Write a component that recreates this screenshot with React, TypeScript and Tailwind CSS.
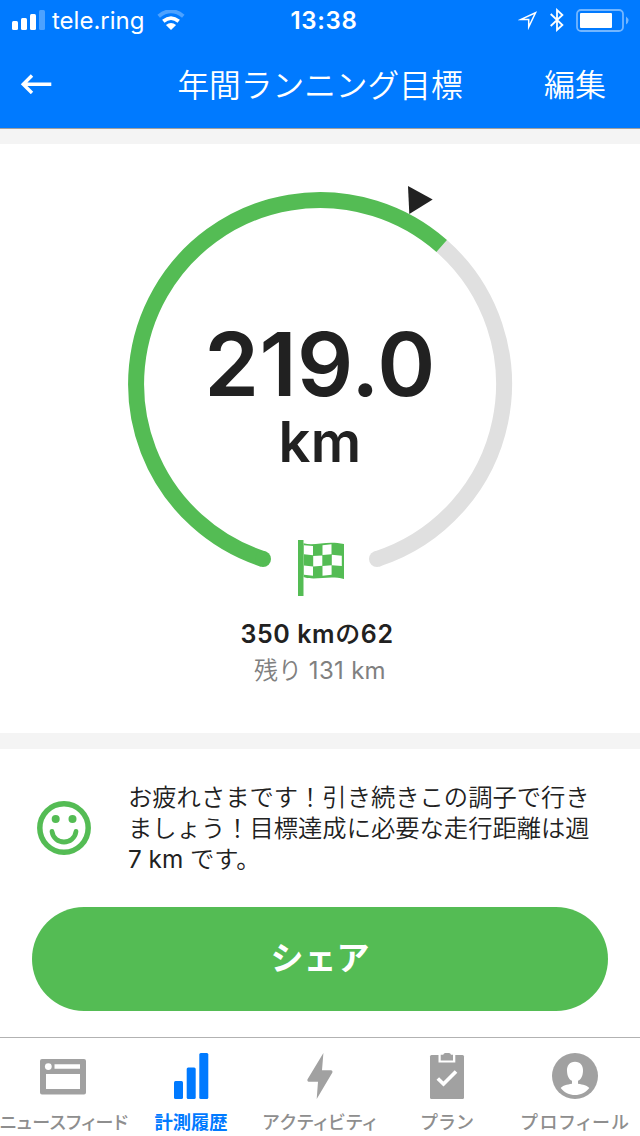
import React from 'react';

type TabProps = {
    label: string;
    active?: boolean;
    textClass?: string;
    children: React.ReactNode;
};

const StatusBar: React.FC = () => (
    <div className="h-10 grid grid-cols-3 items-center">
        <div className="flex items-center pl-3">
            <svg width="34" height="20" viewBox="0 0 34 20" fill="#fff">
                <rect x="0" y="11" width="6" height="9" rx="1.5" />
                <rect x="9" y="8" width="6" height="12" rx="1.5" />
                <rect x="18" y="4" width="6" height="16" rx="1.5" />
                <rect x="27" y="0" width="6" height="20" rx="1.5" opacity="0.3" />
            </svg>
            <span className="ml-1.5 pt-0.5 text-[24px] leading-[38px]">tele.ring</span>
            <svg className="ml-[13px] shrink-0" width="28" height="20" viewBox="0 0 28 20" fill="none" stroke="#fff">
                <path d="M1.7 6.2 Q14 -3.7 26.3 6.2" strokeWidth="4" opacity="0.3" />
                <path d="M6.3 11.3 Q14 5 21.7 11.3" strokeWidth="3.7" />
                <path d="M8.9 15 Q14 10.8 19.1 15 L14 20Z" fill="#fff" stroke="none" />
            </svg>
        </div>
        <div className="pl-2 pt-0.5 text-center text-[24px] font-semibold leading-[38px] tracking-[0.7px]">13:38</div>
        <div className="flex items-center justify-end pr-[11px]">
            <svg width="20" height="20" viewBox="0 0 20 20" fill="none" stroke="#fff" strokeWidth="1.5">
                <path d="M17.5 2.8 L3 9.4 H10.7 V17Z" strokeMiterlimit="10" />
            </svg>
            <svg className="ml-3" width="14" height="24" viewBox="0 0 14 24" fill="none" stroke="#fff" strokeWidth="1.8">
                <path d="M.7 6 L12.4 17 L7 22 V2 L12.4 7 L.7 18" />
            </svg>
            <svg className="ml-3" width="53" height="24" viewBox="0 0 53 24">
                <rect x="1" y="2" width="46" height="21" rx="4" fill="none" stroke="#fff" strokeWidth="1.8" opacity="0.45" />
                <rect x="4" y="5" width="32" height="15" rx="1" fill="#fff" />
                <path d="M50 8.5 Q55 12.5 50 16.5Z" fill="#fff" opacity="0.45" />
            </svg>
        </div>
    </div>
);

const NavBar: React.FC = () => (
    <div className="h-[88px] grid grid-cols-[120px_1fr_120px] items-center text-[31.7px] font-[350]">
        <button className="pl-5" aria-label="back">
            <svg width="32" height="20" viewBox="0 0 32 20" fill="none" stroke="#fff" strokeWidth="3.4">
                <path d="M31.3 10.3 H3 M12 1.5 L3.2 10.3 L12 19" />
            </svg>
        </button>
        <h1 className="pt-[3px] text-center whitespace-nowrap">年間ランニング目標</h1>
        <button className="pt-[3px] pr-[34px] text-right whitespace-nowrap text-[31px]">編集</button>
    </div>
);

const FinishFlag: React.FC = () => (
    <svg width="48" height="58" viewBox="0 0 48 58">
        <path d="M0 1 H5.5 V57 H0Z" fill="#54bc54" />
        <path d="M5.5 4.2 C17 7.5 28 1 46 5 V40 C31 36 17 42 5.5 38Z" fill="#54bc54" />
        <g fill="#fff">
            <path d="M6 6.2 L15 7 V16.2 L6 15.2Z" />
            <path d="M24.5 6.3 L33.5 5.3 V15.3 L24.5 16Z" />
            <path d="M15.2 17 L24.3 16.5 V26.8 L15.2 27.4Z" />
            <path d="M33.8 15.7 L43.8 16.7 V27 L33.8 26.2Z" />
            <path d="M6 26.5 L15 27.5 V36.8 L6 35.8Z" />
            <path d="M24.5 27 L33.6 26.3 V35.8 L24.5 36.8Z" />
        </g>
    </svg>
);

const GoalRing: React.FC = () => (
    <div className="grid place-items-center w-[400px] h-[416px]">
        <svg className="col-start-1 row-start-1" width="400" height="416" viewBox="120 184 400 416" fill="none" strokeWidth="16">
            <path d="M441.7 246 A184 184 0 0 1 377 559" stroke="#e0e0e0" />
            <circle cx="377" cy="559" r="8" fill="#e0e0e0" stroke="none" />
            <path d="M263 559 A184 184 0 1 1 441.7 246" stroke="#54bc54" />
            <circle cx="263" cy="559" r="8" fill="#54bc54" stroke="none" />
            <path d="M408 186 L432.7 199.5 L409.3 214Z" fill="#212121" stroke="none" />
        </svg>
        <div className="col-start-1 row-start-1 self-stretch flex flex-col items-center pt-[136px] text-[#212121] font-semibold">
            <span className="text-[88px] leading-[88px] tracking-[0.4px]">219.0</span>
            <span className="mt-px text-[56px] leading-[67px] tracking-[0.4px]">km</span>
            <div className="mt-[63px] ml-[5px]">
                <FinishFlag />
            </div>
        </div>
    </div>
);

const Smiley: React.FC = () => (
    <svg width="54" height="54" viewBox="0 0 54 54" fill="none" stroke="#54bc54" strokeLinecap="round">
        <circle cx="27" cy="27" r="24.2" strokeWidth="5.5" />
        <circle cx="18.7" cy="18" r="4" fill="#54bc54" stroke="none" />
        <circle cx="35.5" cy="18" r="4" fill="#54bc54" stroke="none" />
        <path d="M15 30.5 C17 44.5 37 44.5 39 30.5" strokeWidth="4.8" />
    </svg>
);

const Tab: React.FC<TabProps> = ({ label, active, textClass, children }) => (
    <button className={`w-32 flex flex-col items-center pt-[14px] pr-0.5 ${active ? 'text-[#007aff]' : 'text-[#a1a1a1]'}`}>
        <svg width="48" height="48" viewBox="0 0 48 48" fill="currentColor">{children}</svg>
        <span className={`leading-6 whitespace-nowrap ${textClass ?? ''} ${active ? 'mt-2.5 font-bold' : 'mt-[11px] font-medium text-[#8e8e8e]'}`}>
            {label}
        </span>
    </button>
);

const TabBar: React.FC = () => (
    <nav className="h-[99px] flex border-t border-[#b2b2b2] overflow-hidden">
        <Tab label="ニュースフィード" textClass="text-[18px] pl-0.5 tracking-[0.4px] [font-feature-settings:'palt']">
            <path fillRule="evenodd" d="M3 7 H45 Q47 7 47 9 V40.5 Q47 42.5 45 42.5 H3 Q1 42.5 1 40.5 V9 Q1 7 3 7Z M15.5 12.3 V16.7 H41 V12.3Z M7 22 V37 H41 V22Z" />
            <circle cx="9.3" cy="14.6" r="3.4" fill="#fff" />
        </Tab>
        <Tab label="計測履歴" active textClass="text-[18.3px]">
            <rect x="7" y="29" width="9" height="18" rx="1.5" />
            <rect x="19.7" y="15.5" width="9" height="31.5" rx="1.5" />
            <rect x="32.3" y="1" width="9" height="46" rx="1.5" />
        </Tab>
        <Tab label="アクティビティ" textClass="text-[18px] pl-0.5 tracking-[1.1px] [font-feature-settings:'palt']">
            <path d="M28.4 1 L12.4 27.5 Q12 29.5 13.5 29.8 H23 L21.7 47 L37.4 20.5 Q38 18.5 36.2 18.3 H27Z" />
        </Tab>
        <Tab label="プラン" textClass="text-[18px]">
            <rect x="7" y="3" width="34" height="44" rx="1.5" />
            <path d="M15.5 3 V10.5 H32.3 V3Z" fill="#fff" />
            <path d="M17.7 8.5 V2.8 H20.2 Q20.8 1 22.2 1 H26 Q27.5 1 28 2.8 H30 V8.5Z" />
            <path d="M14.8 26.5 L20.5 32 L33 19.5" fill="none" stroke="#fff" strokeWidth="3.7" />
        </Tab>
        <Tab label="プロフィール" textClass="text-[18px] pl-0.5 tracking-[2.1px] [font-feature-settings:'palt']">
            <circle cx="24" cy="24" r="23" />
            <path fill="#fff" d="M24 9.8 C29.5 9.8 32.3 14 32 19 C31.8 24 30 27.7 27 28.8 V31.8 C32 32.7 36.5 33.7 38.3 36 C35 40.4 29.5 43 24 43 C18.5 43 13 40.4 9.7 36 C11.5 33.7 16 32.7 21 31.8 V28.8 C18 27.7 16.2 24 16 19 C15.7 14 18.5 9.8 24 9.8Z" />
        </Tab>
    </nav>
);

export default function App() {
    return (
        <div className="w-[640px] h-[1136px] flex flex-col overflow-hidden bg-white text-[#212121] font-['Inter','Noto_Sans_CJK_JP',sans-serif]">
            <header className="bg-[#007aff] text-white">
                <StatusBar />
                <NavBar />
            </header>
            <div className="h-4 bg-[#f4f4f4] border-t border-[#a0a0a0]" />

            <section className="h-[589px] flex flex-col items-center pt-10">
                <GoalRing />
                <p className="mt-[18px] mr-1.5 text-[25px] leading-8 font-semibold tracking-[0.6px]">
                    350 km<span className="font-medium">の</span>62
                </p>
                <p className="mt-[5px] text-[24px] leading-8 font-[350] text-[#808080]">
                    残り <span className="font-normal tracking-[0.3px]">131 km</span>
                </p>
            </section>
            <div className="h-4 bg-[#f4f4f4]" />

            <section className="h-72 px-8">
                <div className="flex pt-[33px] pl-[5px]">
                    <div className="mt-[19px] w-[91px] shrink-0">
                        <Smiley />
                    </div>
                    <p className="text-[24.3px] leading-[31px] whitespace-nowrap font-[350]">
                        お疲れさまです！引き続きこの調子で行き<br />
                        ましょう！目標達成に必要な走行距離は週<br />
                        <span className="font-normal">7 km</span> です。
                    </p>
                </div>
                <button className="mt-8 block w-full h-[104px] rounded-full bg-[#54bc54] text-white text-[33px] font-bold">
                    シェア
                </button>
            </section>
            <TabBar />
        </div>
    );
}
